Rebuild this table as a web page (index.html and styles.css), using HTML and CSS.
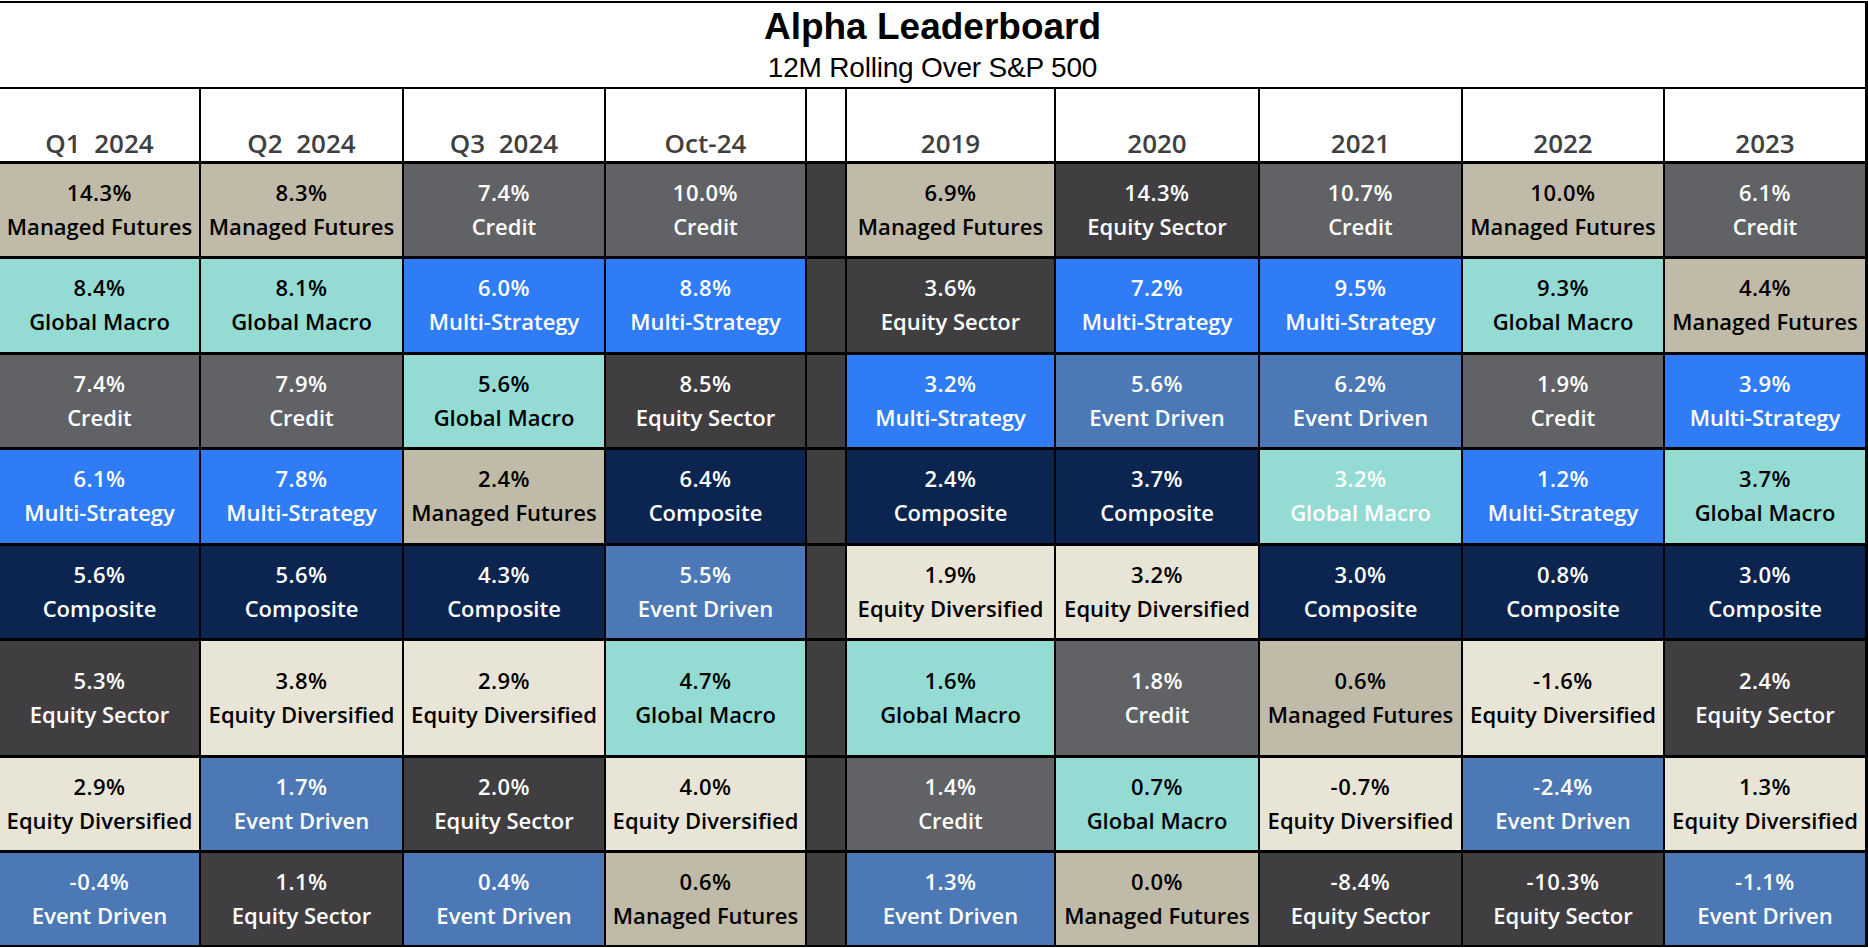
FILE: index.html
```html
<!DOCTYPE html>
<html>
<head>
<meta charset="utf-8">
<title>Alpha Leaderboard</title>
<link rel="stylesheet" href="styles.css">
</head>
<body>
<div class="board">
  <div class="title-block">
    <div class="title">Alpha Leaderboard</div>
    <div class="subtitle">12M Rolling Over S&amp;P 500</div>
  </div>
  <div class="grid">
    <div class="hd">Q1  2024</div>
    <div class="hd">Q2  2024</div>
    <div class="hd">Q3  2024</div>
    <div class="hd">Oct-24</div>
    <div class="hd"></div>
    <div class="hd">2019</div>
    <div class="hd">2020</div>
    <div class="hd">2021</div>
    <div class="hd">2022</div>
    <div class="hd">2023</div>

    <div class="c mf"><span>14.3%</span><span>Managed Futures</span></div>
    <div class="c mf"><span>8.3%</span><span>Managed Futures</span></div>
    <div class="c cr"><span>7.4%</span><span>Credit</span></div>
    <div class="c cr"><span>10.0%</span><span>Credit</span></div>
    <div class="gap"></div>
    <div class="c mf"><span>6.9%</span><span>Managed Futures</span></div>
    <div class="c es"><span>14.3%</span><span>Equity Sector</span></div>
    <div class="c cr"><span>10.7%</span><span>Credit</span></div>
    <div class="c mf"><span>10.0%</span><span>Managed Futures</span></div>
    <div class="c cr"><span>6.1%</span><span>Credit</span></div>

    <div class="c gm"><span>8.4%</span><span>Global Macro</span></div>
    <div class="c gm"><span>8.1%</span><span>Global Macro</span></div>
    <div class="c ms"><span>6.0%</span><span>Multi-Strategy</span></div>
    <div class="c ms"><span>8.8%</span><span>Multi-Strategy</span></div>
    <div class="gap"></div>
    <div class="c es"><span>3.6%</span><span>Equity Sector</span></div>
    <div class="c ms"><span>7.2%</span><span>Multi-Strategy</span></div>
    <div class="c ms"><span>9.5%</span><span>Multi-Strategy</span></div>
    <div class="c gm"><span>9.3%</span><span>Global Macro</span></div>
    <div class="c mf"><span>4.4%</span><span>Managed Futures</span></div>

    <div class="c cr"><span>7.4%</span><span>Credit</span></div>
    <div class="c cr"><span>7.9%</span><span>Credit</span></div>
    <div class="c gm"><span>5.6%</span><span>Global Macro</span></div>
    <div class="c es"><span>8.5%</span><span>Equity Sector</span></div>
    <div class="gap"></div>
    <div class="c ms"><span>3.2%</span><span>Multi-Strategy</span></div>
    <div class="c ed"><span>5.6%</span><span>Event Driven</span></div>
    <div class="c ed"><span>6.2%</span><span>Event Driven</span></div>
    <div class="c cr"><span>1.9%</span><span>Credit</span></div>
    <div class="c ms"><span>3.9%</span><span>Multi-Strategy</span></div>

    <div class="c ms"><span>6.1%</span><span>Multi-Strategy</span></div>
    <div class="c ms"><span>7.8%</span><span>Multi-Strategy</span></div>
    <div class="c mf"><span>2.4%</span><span>Managed Futures</span></div>
    <div class="c co"><span>6.4%</span><span>Composite</span></div>
    <div class="gap"></div>
    <div class="c co"><span>2.4%</span><span>Composite</span></div>
    <div class="c co"><span>3.7%</span><span>Composite</span></div>
    <div class="c gm wt"><span>3.2%</span><span>Global Macro</span></div>
    <div class="c ms"><span>1.2%</span><span>Multi-Strategy</span></div>
    <div class="c gm"><span>3.7%</span><span>Global Macro</span></div>

    <div class="c co"><span>5.6%</span><span>Composite</span></div>
    <div class="c co"><span>5.6%</span><span>Composite</span></div>
    <div class="c co"><span>4.3%</span><span>Composite</span></div>
    <div class="c ed"><span>5.5%</span><span>Event Driven</span></div>
    <div class="gap"></div>
    <div class="c eq"><span>1.9%</span><span>Equity Diversified</span></div>
    <div class="c eq"><span>3.2%</span><span>Equity Diversified</span></div>
    <div class="c co"><span>3.0%</span><span>Composite</span></div>
    <div class="c co"><span>0.8%</span><span>Composite</span></div>
    <div class="c co"><span>3.0%</span><span>Composite</span></div>

    <div class="c es"><span>5.3%</span><span>Equity Sector</span></div>
    <div class="c eq"><span>3.8%</span><span>Equity Diversified</span></div>
    <div class="c eq"><span>2.9%</span><span>Equity Diversified</span></div>
    <div class="c gm"><span>4.7%</span><span>Global Macro</span></div>
    <div class="gap"></div>
    <div class="c gm"><span>1.6%</span><span>Global Macro</span></div>
    <div class="c cr"><span>1.8%</span><span>Credit</span></div>
    <div class="c mf"><span>0.6%</span><span>Managed Futures</span></div>
    <div class="c eq"><span>-1.6%</span><span>Equity Diversified</span></div>
    <div class="c es"><span>2.4%</span><span>Equity Sector</span></div>

    <div class="c eq"><span>2.9%</span><span>Equity Diversified</span></div>
    <div class="c ed"><span>1.7%</span><span>Event Driven</span></div>
    <div class="c es"><span>2.0%</span><span>Equity Sector</span></div>
    <div class="c eq"><span>4.0%</span><span>Equity Diversified</span></div>
    <div class="gap"></div>
    <div class="c cr"><span>1.4%</span><span>Credit</span></div>
    <div class="c gm"><span>0.7%</span><span>Global Macro</span></div>
    <div class="c eq"><span>-0.7%</span><span>Equity Diversified</span></div>
    <div class="c ed"><span>-2.4%</span><span>Event Driven</span></div>
    <div class="c eq"><span>1.3%</span><span>Equity Diversified</span></div>

    <div class="c ed"><span>-0.4%</span><span>Event Driven</span></div>
    <div class="c es"><span>1.1%</span><span>Equity Sector</span></div>
    <div class="c ed"><span>0.4%</span><span>Event Driven</span></div>
    <div class="c mf"><span>0.6%</span><span>Managed Futures</span></div>
    <div class="gap"></div>
    <div class="c ed"><span>1.3%</span><span>Event Driven</span></div>
    <div class="c mf"><span>0.0%</span><span>Managed Futures</span></div>
    <div class="c es"><span>-8.4%</span><span>Equity Sector</span></div>
    <div class="c es"><span>-10.3%</span><span>Equity Sector</span></div>
    <div class="c ed"><span>-1.1%</span><span>Event Driven</span></div>
  </div>
</div>
</body>
</html>
```
FILE: styles.css
```css
html, body {
  margin: 0;
  padding: 0;
  background: #ffffff;
}

.board {
  width: 1868px;
  margin-top: 1px;
  border-top: 2px solid #000;
}

.title-block {
  box-sizing: border-box;
  height: 86px;
  border-right: 3px solid #000;
  border-bottom: 2px solid #000;
  display: flex;
  flex-direction: column;
  align-items: center;
  padding-top: 4px;
  font-family: "Liberation Sans", Arial, sans-serif;
  color: #000;
}

.title {
  font-size: 37px;
  font-weight: 700;
  line-height: 40px;
}

.subtitle {
  font-size: 28px;
  line-height: 32px;
  margin-top: 5px;
  letter-spacing: -0.2px;
}

.grid {
  display: grid;
  grid-template-columns: 199px 201px 200px 199px 38px 207px 202px 201px 200px 200px;
  grid-template-rows: 72px 92px 93px 92px 93px 92px 114px 92px 92px;
  column-gap: 2px;
  row-gap: 3px;
  padding-right: 3px;
  padding-bottom: 2px;
  background: #000;
  font-family: "Open Sans", "Noto Sans", sans-serif;
  font-weight: 600;
}

.hd {
  background: #fff;
  color: #404040;
  font-size: 26px;
  white-space: pre;
  display: flex;
  align-items: flex-end;
  justify-content: center;
  line-height: 30px;
  padding-bottom: 3px;
}

.gap {
  background: #3f3f3f;
}

.c {
  display: flex;
  flex-direction: column;
  align-items: center;
  justify-content: center;
  padding-bottom: 3px;
  font-size: 22px;
  line-height: 34px;
  white-space: nowrap;
  color: #000;
}

.c span:first-child {
  letter-spacing: 0.5px;
}

.mf { background: #c0bba8; color: #000; }
.cr { background: #616265; color: #fff; }
.gm { background: #93dbd3; color: #000; }
.ms { background: #2f7cf6; color: #fff; }
.es { background: #403e41; color: #fff; }
.co { background: #0b2550; color: #fff; }
.ed { background: #4c79b5; color: #fff; }
.eq { background: #e9e5d6; color: #000; }
.wt { color: #fff; }
```
